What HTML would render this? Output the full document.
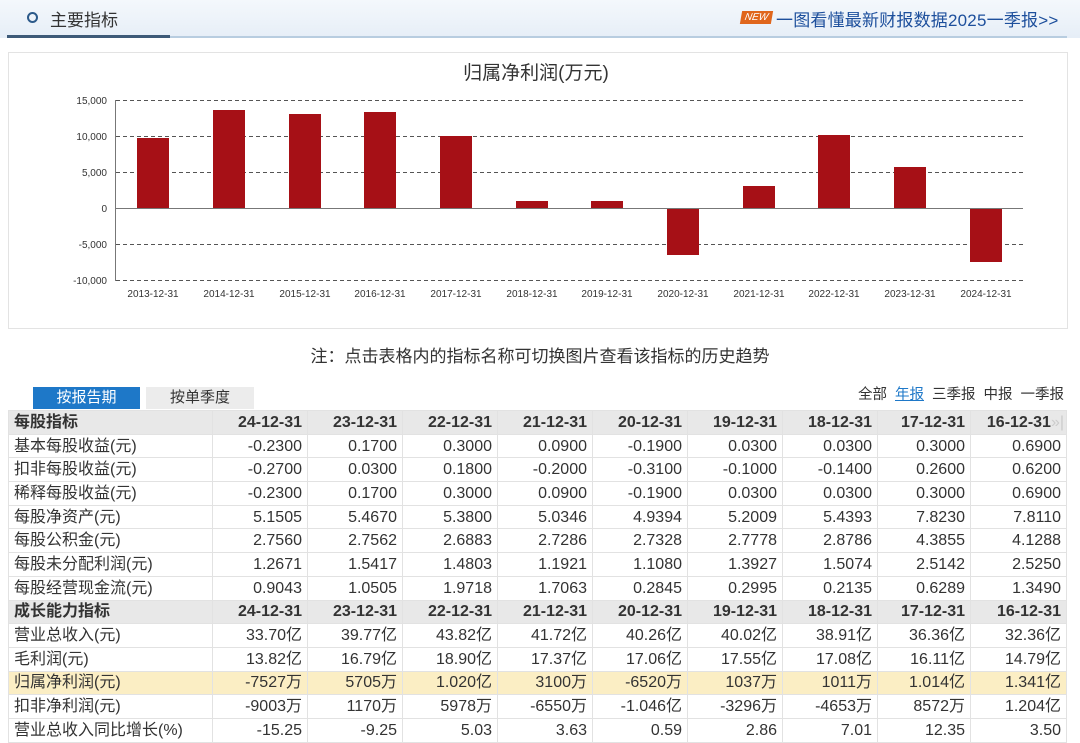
<!DOCTYPE html>
<html><head><meta charset="utf-8"><style>
*{margin:0;padding:0;box-sizing:border-box}
body{width:1080px;height:737px;overflow:hidden;background:#fff;font-family:"Liberation Sans","Noto Sans CJK SC",sans-serif;color:#333;position:relative}
.hdr{position:absolute;left:0;top:0;width:1080px;height:38px;background:linear-gradient(#f4f8fc,#e6eef7)}
.hl{position:absolute;top:36px;left:7px;width:1060px;height:2px;background:#b8cde0}
.hl2{position:absolute;top:35px;left:7px;width:163px;height:3px;background:#3d5a78}
.ttl{position:absolute;left:50px;top:6px;font-size:17px;color:#333}
.circ{position:absolute;left:27px;top:12px;width:11px;height:11px;border:2px solid #2c5a8a;border-radius:50%}
.new{position:absolute;left:741px;top:11px;width:31px;height:13px;background:#e0661c;color:#fff;font-size:10px;font-style:italic;line-height:13px;text-align:center;transform:skewX(-10deg)}
.lnk{position:absolute;left:776px;top:6px;font-size:17px;color:#1d4f9c;letter-spacing:0.2px}
.panel{position:absolute;left:8px;top:52px;width:1060px;height:277px;border:1px solid #e3e3e3;background:#fff}
.note{position:absolute;left:0;width:1080px;text-align:center;padding-left:-4px;top:342px;font-size:17px;color:#333}
.tab1{position:absolute;left:33px;top:387px;width:107px;height:22px;background:#1e78c8;color:#fff;font-size:15px;text-align:center;line-height:22px}
.tab2{position:absolute;left:146px;top:387px;width:108px;height:22px;background:#ececec;color:#333;font-size:15px;text-align:center;line-height:22px}
.rl{position:absolute;right:16px;top:383px;font-size:14.5px;color:#333}
.rl span{margin-left:8px}
.rl .a{color:#1e78c8;text-decoration:underline}
table{position:absolute;left:8px;top:410px;border-collapse:collapse;width:1058px;font-size:16px;table-layout:fixed}
td{height:23.7px;border:1px solid #e2e2e2;padding:0 5px;text-align:right;white-space:nowrap;line-height:21px;overflow:hidden}
td:first-child{text-align:left}
tr.h td{background:#e8e8e8;font-weight:bold}
tr.y td{background:#fbeec4}
</style></head><body>
<div class="hdr"></div>
<div class="hl"></div><div class="hl2"></div>
<div class="circ"></div>
<div class="ttl">主要指标</div>
<div class="new">NEW</div>
<div class="lnk">一图看懂最新财报数据2025一季报&gt;&gt;</div>
<div class="panel"></div>
<svg style="position:absolute;left:0;top:0" width="1080" height="330">
<text x="536" y="79" font-size="19" text-anchor="middle" fill="#333" font-family="Liberation Sans,Noto Sans CJK SC,sans-serif">归属净利润(万元)</text>
<g font-size="10" fill="#333" text-anchor="end" font-family="Liberation Sans,sans-serif">
<text x="107" y="104">15,000</text><text x="107" y="140">10,000</text><text x="107" y="176">5,000</text><text x="107" y="212">0</text><text x="107" y="248">-5,000</text><text x="107" y="284">-10,000</text></g>
<g stroke="#555" stroke-dasharray="4,3" stroke-width="1">
<line x1="116" y1="100.5" x2="1023" y2="100.5"/><line x1="116" y1="136.5" x2="1023" y2="136.5"/><line x1="116" y1="172.5" x2="1023" y2="172.5"/><line x1="116" y1="244.5" x2="1023" y2="244.5"/><line x1="116" y1="280.5" x2="1023" y2="280.5"/></g>
<line x1="115.5" y1="100" x2="115.5" y2="281" stroke="#777"/>
<line x1="116" y1="208.5" x2="1023" y2="208.5" stroke="#777"/>
<g fill="#a61016">
<rect x="137" y="138" width="32" height="70"/>
<rect x="213" y="110" width="32" height="98"/>
<rect x="289" y="114" width="32" height="94"/>
<rect x="364" y="112" width="32" height="96"/>
<rect x="440" y="136" width="32" height="72"/>
<rect x="516" y="201" width="32" height="7"/>
<rect x="591" y="201" width="32" height="7"/>
<rect x="667" y="209" width="32" height="46"/>
<rect x="743" y="186" width="32" height="22"/>
<rect x="818" y="135" width="32" height="73"/>
<rect x="894" y="167" width="32" height="41"/>
<rect x="970" y="209" width="32" height="53"/>
</g>
<g font-size="10" fill="#333" text-anchor="middle" font-family="Liberation Sans,sans-serif">
<text x="153" y="297">2013-12-31</text><text x="229" y="297">2014-12-31</text><text x="305" y="297">2015-12-31</text><text x="380" y="297">2016-12-31</text><text x="456" y="297">2017-12-31</text><text x="532" y="297">2018-12-31</text><text x="607" y="297">2019-12-31</text><text x="683" y="297">2020-12-31</text><text x="759" y="297">2021-12-31</text><text x="834" y="297">2022-12-31</text><text x="910" y="297">2023-12-31</text><text x="986" y="297">2024-12-31</text></g>
</svg>
<div class="note">注：点击表格内的指标名称可切换图片查看该指标的历史趋势</div>
<div class="tab1">按报告期</div><div class="tab2">按单季度</div>
<div class="rl">全部<span class="a">年报</span><span>三季报</span><span>中报</span><span>一季报</span></div>
<table>
<colgroup><col style="width:204px"><col style="width:95px"><col style="width:95px"><col style="width:95px"><col style="width:95px"><col style="width:95px"><col style="width:95px"><col style="width:95px"><col style="width:93px"><col style="width:96px"></colgroup>
<tr class="h"><td>每股指标</td><td>24-12-31</td><td>23-12-31</td><td>22-12-31</td><td>21-12-31</td><td>20-12-31</td><td>19-12-31</td><td>18-12-31</td><td>17-12-31</td><td style="padding-right:2px">16-12-31<span style="color:#ccc;font-weight:normal">»|</span></td></tr>
<tr><td>基本每股收益(元)</td><td>-0.2300</td><td>0.1700</td><td>0.3000</td><td>0.0900</td><td>-0.1900</td><td>0.0300</td><td>0.0300</td><td>0.3000</td><td>0.6900</td></tr>
<tr><td>扣非每股收益(元)</td><td>-0.2700</td><td>0.0300</td><td>0.1800</td><td>-0.2000</td><td>-0.3100</td><td>-0.1000</td><td>-0.1400</td><td>0.2600</td><td>0.6200</td></tr>
<tr><td>稀释每股收益(元)</td><td>-0.2300</td><td>0.1700</td><td>0.3000</td><td>0.0900</td><td>-0.1900</td><td>0.0300</td><td>0.0300</td><td>0.3000</td><td>0.6900</td></tr>
<tr><td>每股净资产(元)</td><td>5.1505</td><td>5.4670</td><td>5.3800</td><td>5.0346</td><td>4.9394</td><td>5.2009</td><td>5.4393</td><td>7.8230</td><td>7.8110</td></tr>
<tr><td>每股公积金(元)</td><td>2.7560</td><td>2.7562</td><td>2.6883</td><td>2.7286</td><td>2.7328</td><td>2.7778</td><td>2.8786</td><td>4.3855</td><td>4.1288</td></tr>
<tr><td>每股未分配利润(元)</td><td>1.2671</td><td>1.5417</td><td>1.4803</td><td>1.1921</td><td>1.1080</td><td>1.3927</td><td>1.5074</td><td>2.5142</td><td>2.5250</td></tr>
<tr><td>每股经营现金流(元)</td><td>0.9043</td><td>1.0505</td><td>1.9718</td><td>1.7063</td><td>0.2845</td><td>0.2995</td><td>0.2135</td><td>0.6289</td><td>1.3490</td></tr>
<tr class="h"><td>成长能力指标</td><td>24-12-31</td><td>23-12-31</td><td>22-12-31</td><td>21-12-31</td><td>20-12-31</td><td>19-12-31</td><td>18-12-31</td><td>17-12-31</td><td>16-12-31</td></tr>
<tr><td>营业总收入(元)</td><td>33.70亿</td><td>39.77亿</td><td>43.82亿</td><td>41.72亿</td><td>40.26亿</td><td>40.02亿</td><td>38.91亿</td><td>36.36亿</td><td>32.36亿</td></tr>
<tr><td>毛利润(元)</td><td>13.82亿</td><td>16.79亿</td><td>18.90亿</td><td>17.37亿</td><td>17.06亿</td><td>17.55亿</td><td>17.08亿</td><td>16.11亿</td><td>14.79亿</td></tr>
<tr class="y"><td>归属净利润(元)</td><td>-7527万</td><td>5705万</td><td>1.020亿</td><td>3100万</td><td>-6520万</td><td>1037万</td><td>1011万</td><td>1.014亿</td><td>1.341亿</td></tr>
<tr><td>扣非净利润(元)</td><td>-9003万</td><td>1170万</td><td>5978万</td><td>-6550万</td><td>-1.046亿</td><td>-3296万</td><td>-4653万</td><td>8572万</td><td>1.204亿</td></tr>
<tr><td>营业总收入同比增长(%)</td><td>-15.25</td><td>-9.25</td><td>5.03</td><td>3.63</td><td>0.59</td><td>2.86</td><td>7.01</td><td>12.35</td><td>3.50</td></tr>
</table>
</body></html>
